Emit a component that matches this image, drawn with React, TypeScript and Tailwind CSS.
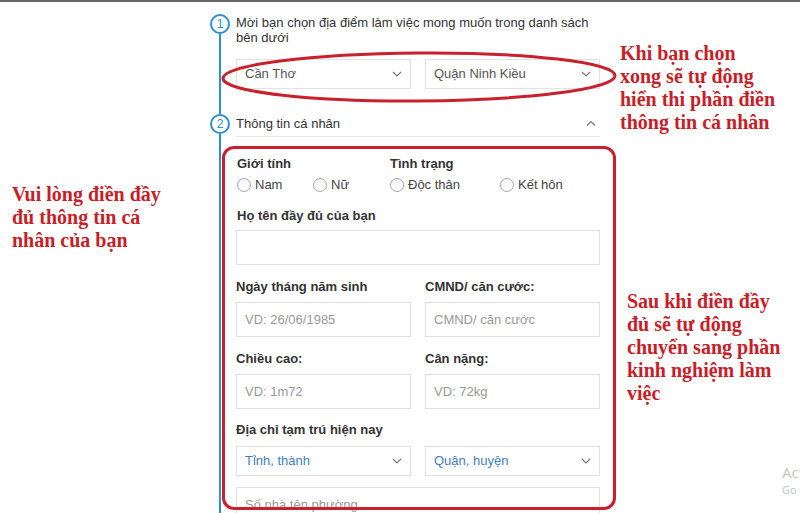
import React from 'react';

const Chevron: React.FC<{ up?: boolean }> = ({ up }) => (
  <svg width="10" height="6" viewBox="0 0 10 6" className="shrink-0">
    <path
      d={up ? 'M1 5.5 L5 1.5 L9 5.5' : 'M1 1 L5 5 L9 1'}
      fill="none"
      stroke="#7a7a7a"
      strokeWidth="1.2"
    />
  </svg>
);

const StepCircle: React.FC<{ n: number }> = ({ n }) => (
  <div className="w-5 h-5 rounded-full border-2 border-[#2b8fd6] bg-white flex items-center justify-center text-[12px] leading-none text-[#2b8fd6] shrink-0">
    {n}
  </div>
);

const SelectBox: React.FC<{ value: string; accent?: boolean }> = ({ value, accent }) => (
  <div className="h-[30px] border border-[#e2e2e2] bg-white flex items-center justify-between pl-[8px] pr-[8px]">
    <span className={`text-[13px] ${accent ? 'text-[#3f7fc0]' : 'text-[#555]'}`}>{value}</span>
    <Chevron />
  </div>
);

const TextBox: React.FC<{ placeholder?: string }> = ({ placeholder }) => (
  <input
    readOnly
    placeholder={placeholder}
    className="w-full h-[35px] border border-[#e0e0e0] bg-white px-[8px] text-[13px] placeholder:text-[#999] outline-none"
  />
);

const Label: React.FC<{ children: React.ReactNode }> = ({ children }) => (
  <div className="text-[13px] leading-[16px] font-bold text-[#333]">{children}</div>
);

const Radio: React.FC<{ label: string; w: string }> = ({ label, w }) => (
  <div className={`flex items-center gap-[4px] ${w}`}>
    <span className="w-[14px] h-[14px] rounded-full border border-[#a9a9a9] bg-gradient-to-b from-[#f4f4f4] to-white" />
    <span className="text-[13px] text-[#444]">{label}</span>
  </div>
);

const Field: React.FC<{ label: string; placeholder: string }> = ({ label, placeholder }) => (
  <div className="flex flex-col gap-[7px]">
    <Label>{label}</Label>
    <TextBox placeholder={placeholder} />
  </div>
);

export default function App() {
  return (
    <div className="w-[800px] h-[513px] overflow-hidden bg-white relative" style={{ fontFamily: '"Liberation Sans", Arial, sans-serif' }}>
      <div className="h-[2px] bg-[#666]" />
      <div className="flex">
        {/* left note */}
        <div className="w-[210px] pt-[181px] pl-[12px] shrink-0">
          <p className="text-[20px] leading-[23px] font-bold text-[#c81e28]" style={{ fontFamily: '"Liberation Serif", "Times New Roman", serif' }}>
            Vui lòng điền đầy<br />đủ thông tin cá<br />nhân của bạn
          </p>
        </div>

        {/* stepper */}
        <div className="w-[410px] shrink-0 flex flex-col pt-[12px]">
          {/* step 1 */}
          <div className="flex relative">
            <div className="flex flex-col items-center w-5">
              <StepCircle n={1} />
              <div className="flex-1 w-[2px] bg-[#2b8fd6]" />
            </div>
            <div className="ml-[6px] w-[364px] pb-[25px]">
              <p className="text-[13px] leading-[15px] text-[#333] pt-[1px]">
                Mời bạn chọn địa điểm làm việc mong muốn trong danh sách bên dưới
              </p>
              <div className="grid grid-cols-2 gap-[14px] mt-[14px]">
                <SelectBox value="Cần Thơ" />
                <SelectBox value="Quận Ninh Kiều" />
              </div>
            </div>
            <svg className="absolute left-[10px] top-[34px] pointer-events-none" width="400" height="56" viewBox="0 0 400 56">
              <ellipse cx="199" cy="29" rx="196" ry="24" fill="none" stroke="#c8202c" strokeWidth="3" transform="rotate(-0.4 199 29)" />
            </svg>
          </div>

          {/* step 2 */}
          <div className="flex">
            <div className="flex flex-col items-center w-5">
              <StepCircle n={2} />
              <div className="flex-1 w-[2px] bg-[#2b8fd6]" />
            </div>
            <div className="ml-[6px] w-[364px]">
              <div className="h-[23px] border-b border-[#e6e6e6] flex items-start justify-between pr-[4px]">
                <span className="text-[13px] leading-[19px] text-[#333]">Thông tin cá nhân</span>
                <span className="pt-[6px]"><Chevron up /></span>
              </div>
              <div className="relative pt-[19px] pl-[1px]">
                <div className="absolute -left-[14px] top-[9px] w-[394px] h-[364px] border-[3px] border-[#c8202c] rounded-[12px] pointer-events-none" />
                <div className="flex">
                  <div className="w-[153px]">
                    <Label>Giới tính</Label>
                    <div className="flex mt-[3px]">
                      <Radio label="Nam" w="w-[76px]" />
                      <Radio label="Nữ" w="w-[77px]" />
                    </div>
                  </div>
                  <div>
                    <Label>Tình trạng</Label>
                    <div className="flex mt-[3px]">
                      <Radio label="Độc thân" w="w-[110px]" />
                      <Radio label="Kết hôn" w="w-[80px]" />
                    </div>
                  </div>
                </div>
                <div className="mt-[13px] -ml-[1px] flex flex-col gap-[14px]">
                  <div className="flex flex-col gap-[6px]">
                    <div className="pl-[1px]"><Label>Họ tên đầy đủ của bạn</Label></div>
                    <TextBox />
                  </div>
                  <div className="grid grid-cols-2 gap-[14px]">
                    <Field label="Ngày tháng năm sinh" placeholder="VD: 26/06/1985" />
                    <Field label="CMND/ căn cước:" placeholder="CMND/ căn cước" />
                  </div>
                  <div className="grid grid-cols-2 gap-[14px]">
                    <Field label="Chiều cao:" placeholder="VD: 1m72" />
                    <Field label="Cân nặng:" placeholder="VD: 72kg" />
                  </div>
                  <div className="flex flex-col -mt-[1px]">
                    <Label>Địa chỉ tạm trú hiện nay</Label>
                    <div className="grid grid-cols-2 gap-[14px] mt-[8px]">
                      <SelectBox value="Tỉnh, thành" accent />
                      <SelectBox value="Quận, huyện" accent />
                    </div>
                    <div className="mt-[11px]">
                      <TextBox placeholder="Số nhà tên phường" />
                    </div>
                  </div>
                </div>
              </div>
            </div>
          </div>
        </div>

        {/* right notes */}
        <div className="pt-[40px] flex flex-col" style={{ fontFamily: '"Liberation Serif", "Times New Roman", serif' }}>
          <p className="text-[20px] leading-[23px] font-bold text-[#c81e28] whitespace-nowrap">
            Khi bạn chọn<br />xong sẽ tự động<br />hiển thi phần điền<br />thông tin cá nhân
          </p>
          <p className="mt-[156px] ml-[7px] text-[20px] leading-[23px] font-bold text-[#c81e28] whitespace-nowrap">
            Sau khi điền đầy<br />đủ sẽ tự động<br />chuyển sang phần<br />kinh nghiệm làm<br />việc
          </p>
        </div>
      </div>

      {/* activation watermark */}
      <div className="absolute left-[782px] top-[465px] text-[#c4c4c4] whitespace-nowrap leading-none" style={{ fontFamily: '"Open Sans", sans-serif' }}>
        <div className="text-[15px]">Activate Windows</div>
        <div className="text-[11px] mt-[4px]">Go to Settings</div>
      </div>
    </div>
  );
}
